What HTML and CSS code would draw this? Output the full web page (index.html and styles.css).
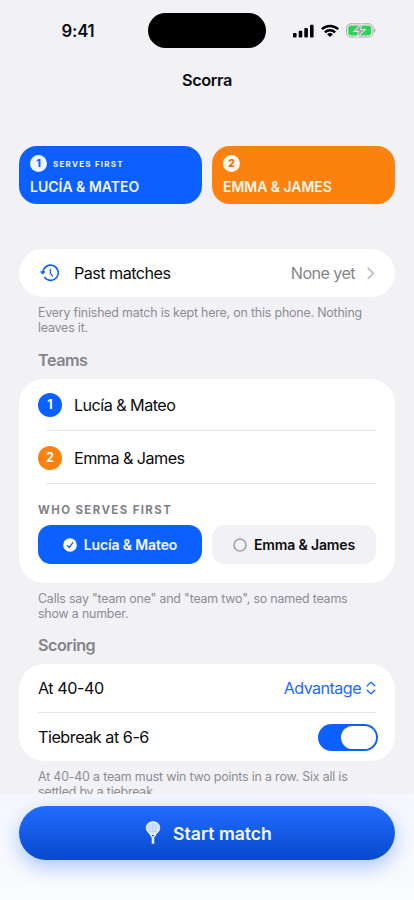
FILE: index.html
```html
<!DOCTYPE html>
<html lang="en">
<head>
<meta charset="utf-8">
<meta name="viewport" content="width=device-width, initial-scale=1">
<title>Scorra</title>
<link rel="stylesheet" href="styles.css">
</head>
<body>
<div class="phone">
  <header class="status">
    <time class="clock">9:41</time>
    <div class="island"></div>
    <div class="signals">
      <svg width="21" height="14" viewBox="0 0 21 14"><rect x="0" y="9" width="3.6" height="4.6" rx="1"/><rect x="5.7" y="6.7" width="3.6" height="6.9" rx="1"/><rect x="11.3" y="3.9" width="3.6" height="9.7" rx="1"/><rect x="17" y=".8" width="3.6" height="12.8" rx="1"/></svg>
      <svg width="18" height="14" viewBox="0 0 18 14" fill="none" stroke="#000" stroke-width="2.5"><path d="M.9 5.2a11.6 11.6 0 0 1 16.2 0M3.9 8.3a7.3 7.3 0 0 1 10.2 0"/><path d="M9 13 6.1 10.3a4.2 4.2 0 0 1 5.8 0z" fill="#000" stroke="none"/></svg>
      <svg width="30" height="15" viewBox="0 0 30 15"><rect x=".5" y=".8" width="26.5" height="13.2" rx="4.4" fill="none" stroke="#a5a5aa"/><rect x="2.2" y="2.4" width="23.1" height="10" rx="2.8" fill="#30d158"/><path d="M28.2 5.2c1.6.5 1.6 3.9 0 4.4z" fill="#a5a5aa"/><path d="M15.2 1.6 8.7 8.1h4.2l-1.2 5.3 6.7-6.6h-4.2z" fill="#a5a5aa" stroke="#f2f1f6" stroke-width="1.6" paint-order="stroke"/></svg>
    </div>
  </header>
  <h1 class="title">Scorra</h1>

  <main>
    <section class="score-row">
      <div class="side side-one">
        <div class="side-top"><span class="dot">1</span><span class="serves">SERVES FIRST</span></div>
        <div class="side-name">LUCÍA &amp; MATEO</div>
      </div>
      <div class="side side-two">
        <div class="side-top"><span class="dot">2</span></div>
        <div class="side-name name-two">EMMA &amp; JAMES</div>
      </div>
    </section>

    <section class="card history">
      <svg class="clock-icon" width="20" height="18" viewBox="0 0 20 18" fill="none" stroke="#0b60ff" stroke-width="1.6" stroke-linecap="round" stroke-linejoin="round"><path d="M3 8.4a7.6 7.6 0 1 1 1.7 5.2"/><path d="M10.3 5v4.2l2.2 3" stroke-width="1.2"/><path d="M.9 7.700h4L2.900 10z" fill="#0b60ff" stroke-width=".8"/></svg>
      <span class="label past">Past matches</span>
      <span class="value">None yet</span>
      <svg class="chevron" width="8" height="13" viewBox="0 0 8 13" fill="none" stroke="#bdbdc1" stroke-width="1.8" stroke-linecap="round" stroke-linejoin="round"><path d="m1.2 1.3 5.2 5-5.2 5"/></svg>
    </section>
    <p class="note note-one">Every finished match is kept here, on this phone. Nothing<br>leaves it.</p>

    <h2 class="heading">Teams</h2>
    <section class="card teams">
      <div class="team"><span class="badge blue">1</span><span class="label lucia">Lucía &amp; Mateo</span></div>
      <div class="team"><span class="badge orange">2</span><span class="label emma">Emma &amp; James</span></div>
      <h3 class="caption">WHO SERVES FIRST</h3>
      <div class="choices">
        <button class="choice selected"><svg width="14" height="14" viewBox="0 0 14 14"><circle cx="7" cy="7" r="6.8" fill="#fff"/><path d="m4.3 7.5 1.9 2.2L9.8 4.7" fill="none" stroke="#0b60ff" stroke-width="1.3" stroke-linecap="round" stroke-linejoin="round"/></svg><span class="c-one">Lucía &amp; Mateo</span></button>
        <button class="choice"><svg width="14" height="14" viewBox="0 0 14 14"><circle cx="7" cy="7" r="6" fill="none" stroke="#a1a1a5" stroke-width="1.6"/></svg><span class="c-two">Emma &amp; James</span></button>
      </div>
    </section>
    <p class="note note-two">Calls say "team one" and "team two", so named teams<br>show a number.</p>

    <h2 class="heading heading-scoring">Scoring</h2>
    <section class="card scoring">
      <div class="setting"><span class="label forty">At 40-40</span><span class="picker">Advantage</span><svg width="10" height="14" viewBox="0 0 10 14" fill="none" stroke="#0b60ff" stroke-width="1.3" stroke-linecap="round" stroke-linejoin="round"><path d="m1.2 4.8 3.8-3.7 3.8 3.7M1.2 9.2 5 12.9l3.8-3.7"/></svg></div>
      <div class="setting"><span class="label tie">Tiebreak at 6-6</span><span class="switch"><span class="knob"></span></span></div>
    </section>
    <p class="note note-three">At 40-40 a team must win two points in a row. Six all is<br>settled by a tiebreak.</p>
  </main>

  <footer class="dock">
    <button class="start">
      <svg width="16" height="24" viewBox="0 0 16 24"><path d="M8 .8c4 0 6.7 2.5 6.7 5.9 0 3-2.1 5.6-4.8 6.8H6.1C3.4 12.3 1.3 9.7 1.3 6.7 1.3 3.3 4 .8 8 .8z" fill="#dfe9ff" stroke="#fff" stroke-width="1"/><path d="M5 1.8v10.8M8 1.2v12M11 1.8v10.8M1.8 4.3h12.4M1.5 7.3h13M2.8 10.3h10.4" stroke="#a3c0fb" stroke-width=".5"/><path d="m4.900 13 2.300 3.200h1.600l2.300-3.200" fill="none" stroke="#e5edff" stroke-width="1.3"/><path d="M8 15.8v7" stroke="#e5edff" stroke-width="2.6"/></svg>
      <span>Start match</span>
    </button>
  </footer>
</div>
</body>
</html>
```
FILE: styles.css
```css
* { box-sizing: border-box; margin: 0; padding: 0; }
body { background: #f2f1f6; font-family: Inter, "Liberation Sans", sans-serif; color: #0c0c0e; }
svg { display: block; flex: none; }
button { border: 0; font-family: inherit; }
.phone { position: relative; width: 414px; height: 900px; overflow: hidden; background: #f2f1f6; }

.status { display: grid; grid-template-columns: 148px 118px 148px; height: 62px; padding-top: 13px; }
.clock { padding-left: 8px; height: 35px; line-height: 36px; text-align: center; font-size: 16.8px; font-weight: 600; letter-spacing: -.2px; }
.island { height: 35px; border-radius: 18px; background: #000; }
.signals { display: flex; align-items: center; height: 35px; padding-left: 27px; gap: 7px; }
.title { height: 36px; line-height: 36px; text-align: center; font-size: 16.3px; font-weight: 600; letter-spacing: -.35px; }

main { padding: 48px 19px 0; }
.score-row { display: grid; grid-template-columns: 183px 183px; justify-content: space-between; margin-bottom: 45px; }
.side { height: 58px; border-radius: 18px; padding: 9px 11px 0; color: #f0f5ff; }
.side-one { background: #0b60ff; }
.side-two { background: #fb820e; color: #fff5eb; }
.side-top { display: flex; align-items: center; gap: 6px; height: 17px; }
.dot { width: 17px; height: 17px; border-radius: 50%; background: #eff4ff; color: #0b60ff; font-size: 10.5px; line-height: 17px; font-weight: 800; text-align: center; }
.side-two .dot { background: #fff4e9; color: #e87200; }
.serves { font-size: 8px; font-weight: 700; letter-spacing: 1.25px; }
.side-name { margin-top: 5px; line-height: 19px; font-size: 14px; font-weight: 600; white-space: nowrap; }
.name-two { letter-spacing: -.05px; }

.card { background: #fff; border-radius: 25px; }
.history { display: flex; align-items: center; height: 48px; padding: 0 20px 0 21px; }
.label { font-size: 16.2px; letter-spacing: -.55px; white-space: nowrap; }
.tie, .forty { letter-spacing: -.48px; }
.past { margin-left: 14px; }
.value { margin-left: auto; font-size: 16.2px; letter-spacing: -.6px; color: #858589; }
.chevron { margin-left: 12px; }
.note { margin: 8px 19px 0; height: 31px; font-size: 12.4px; line-height: 15.3px; letter-spacing: -.18px; color: #8c8c91; white-space: nowrap; }
.heading { margin: 14px 19px 9px; height: 20px; line-height: 20px; font-size: 16.2px; font-weight: 600; letter-spacing: -.5px; color: #848489; }
.heading-scoring { margin-top: 13px; }

.teams { height: 204px; padding: 0 19px; }
.team { display: flex; align-items: center; height: 52px; gap: 12px; position: relative; }
.team + .team { height: 53px; }
.team::after { content: ""; position: absolute; left: 8px; right: 0; bottom: 0; height: 1px; background: #e7e7e9; }
.badge { width: 24px; height: 24px; border-radius: 50%; color: #fff; font-size: 12.5px; line-height: 24px; font-weight: 700; text-align: center; }
.blue { background: #0b60ff; }
.orange { background: #fb820e; }
.caption { padding-top: 18px; height: 41px; line-height: 16px; font-size: 11.4px; font-weight: 700; letter-spacing: 1.42px; color: #828287; }
.choices { display: grid; grid-template-columns: 164px 164px; justify-content: space-between; }
.choice { display: flex; align-items: center; justify-content: center; gap: 7px; height: 39px; border-radius: 13px; background: #f2f1f6; color: #0c0c0e; font-size: 14px; font-weight: 600; letter-spacing: -.15px; white-space: nowrap; }
.selected { background: #0b60ff; color: #f4f7ff; }

.scoring { height: 97px; padding: 0 19px; }
.setting { display: flex; align-items: center; height: 49px; }
.setting + .setting { height: 48px; }
.setting:first-child { border-bottom: 1px solid #e7e7e9; }
.picker { margin-left: auto; margin-right: 5px; font-size: 16.2px; letter-spacing: -.6px; color: #1c69ff; }
.switch { display: flex; justify-content: flex-end; width: 60px; height: 27px; padding: 2px; margin: 0 -2px 0 auto; border-radius: 14px; background: #0b60ff; }
.knob { width: 35px; height: 23px; border-radius: 12px; background: #fff; }

.dock { position: absolute; left: 0; right: 0; bottom: 0; height: 106px; padding: 12px 19px; overflow: hidden; background: linear-gradient(#f5f7fe, #fafbfc); }
.start { display: flex; align-items: center; justify-content: center; gap: 12px; width: 376px; height: 54px; padding-left: 3px; border-radius: 27px; background: linear-gradient(#216dff, #0848cc); box-shadow: 0 7px 20px rgba(11, 96, 255, .33); color: #f4f7ff; font-size: 17.6px; font-weight: 600; }
```
